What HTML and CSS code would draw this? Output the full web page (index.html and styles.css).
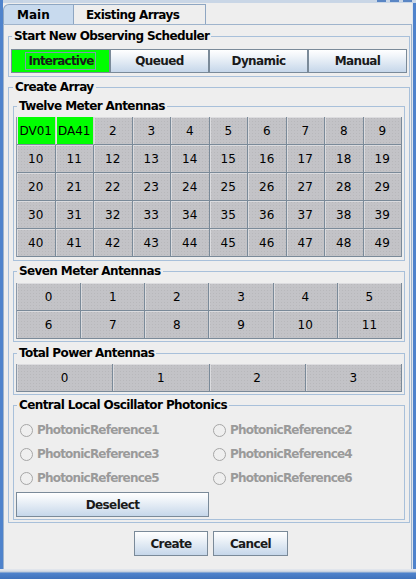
FILE: index.html
```html
<!DOCTYPE html>
<html>
<head>
<meta charset="utf-8">
<link rel="stylesheet" href="styles.css">
</head>
<body>
<div class="window">
  <div class="topbar"><span class="wbtn"></span><span class="wbtn"></span><span class="wbtn"></span></div>
  <div class="middle">
    <div class="edge-l"></div>
    <div class="content">
      <div class="tabs">
        <div class="tab sel">Main</div>
        <div class="tab">Existing Arrays</div>
      </div>
      <div class="panel">
        <fieldset class="grp g-sched">
          <legend>Start New Observing Scheduler</legend>
          <div class="seg">
            <div class="btn green"><span class="focus">Interactive</span></div>
            <div class="btn">Queued</div>
            <div class="btn">Dynamic</div>
            <div class="btn">Manual</div>
          </div>
        </fieldset>
        <fieldset class="grp g-create">
          <legend>Create Array</legend>
          <fieldset class="grp sub twelve">
            <legend>Twelve Meter Antennas</legend>
            <div class="cells c10">
              <div class="cell on">DV01</div><div class="cell on">DA41</div><div class="cell">2</div><div class="cell">3</div><div class="cell">4</div><div class="cell">5</div><div class="cell">6</div><div class="cell">7</div><div class="cell">8</div><div class="cell">9</div>
              <div class="cell">10</div><div class="cell">11</div><div class="cell">12</div><div class="cell">13</div><div class="cell">14</div><div class="cell">15</div><div class="cell">16</div><div class="cell">17</div><div class="cell">18</div><div class="cell">19</div>
              <div class="cell">20</div><div class="cell">21</div><div class="cell">22</div><div class="cell">23</div><div class="cell">24</div><div class="cell">25</div><div class="cell">26</div><div class="cell">27</div><div class="cell">28</div><div class="cell">29</div>
              <div class="cell">30</div><div class="cell">31</div><div class="cell">32</div><div class="cell">33</div><div class="cell">34</div><div class="cell">35</div><div class="cell">36</div><div class="cell">37</div><div class="cell">38</div><div class="cell">39</div>
              <div class="cell">40</div><div class="cell">41</div><div class="cell">42</div><div class="cell">43</div><div class="cell">44</div><div class="cell">45</div><div class="cell">46</div><div class="cell">47</div><div class="cell">48</div><div class="cell">49</div>
            </div>
          </fieldset>
          <fieldset class="grp sub seven">
            <legend>Seven Meter Antennas</legend>
            <div class="cells c6">
              <div class="cell">0</div><div class="cell">1</div><div class="cell">2</div><div class="cell">3</div><div class="cell">4</div><div class="cell">5</div>
              <div class="cell">6</div><div class="cell">7</div><div class="cell">8</div><div class="cell">9</div><div class="cell">10</div><div class="cell">11</div>
            </div>
          </fieldset>
          <fieldset class="grp sub tp">
            <legend>Total Power Antennas</legend>
            <div class="cells c4">
              <div class="cell">0</div><div class="cell">1</div><div class="cell">2</div><div class="cell">3</div>
            </div>
          </fieldset>
          <fieldset class="grp sub clo">
            <legend>Central Local Oscillator Photonics</legend>
            <div class="radios">
              <div class="radio"><span class="dot"></span>PhotonicReference1</div>
              <div class="radio"><span class="dot"></span>PhotonicReference2</div>
              <div class="radio"><span class="dot"></span>PhotonicReference3</div>
              <div class="radio"><span class="dot"></span>PhotonicReference4</div>
              <div class="radio"><span class="dot"></span>PhotonicReference5</div>
              <div class="radio"><span class="dot"></span>PhotonicReference6</div>
            </div>
            <div class="desel-row"><div class="btn deselect">Deselect</div></div>
          </fieldset>
        </fieldset>
        <div class="actions">
          <div class="btn act create">Create</div>
          <div class="btn act cancel">Cancel</div>
        </div>
      </div>
    </div>
    <div class="edge-r"></div>
  </div>
  <div class="bottombar"></div>
</div>
</body>
</html>
```
FILE: styles.css
```css
html, body {
  margin: 0;
  padding: 0;
  background: #eeeeee;
}
body {
  font-family: "DejaVu Sans", "Liberation Sans", sans-serif;
  font-size: 12px;
  color: #000;
}
.window {
  width: 416px;
  height: 579px;
  display: flex;
  flex-direction: column;
  background: #eeeeee;
  overflow: hidden;
}
.topbar {
  height: 3px;
  background: #c9d6e6;
  border-left: 3px solid #4f83cc;
  display: flex;
  justify-content: flex-end;
  gap: 4px;
  padding-right: 4px;
}
.wbtn {
  width: 9px;
  height: 2px;
  background: #5a86c4;
}
.middle {
  flex: 1;
  display: flex;
  min-height: 0;
}
.edge-l {
  width: 3px;
  background: #4f83cc;
}
.edge-r {
  width: 4px;
  background: linear-gradient(to right, #dfe6ee 0, #dfe6ee 1px, #4f83cc 1px);
}
.content {
  flex: 1;
  display: flex;
  flex-direction: column;
  padding-top: 1px;
  min-width: 0;
}
.tabs {
  display: flex;
  height: 20px;
}
.tab {
  box-sizing: border-box;
  height: 20px;
  border: 1px solid #8ea6c2;
  border-bottom: none;
  font-weight: bold;
  letter-spacing: -0.6px;
  line-height: 20px;
  padding-left: 13px;
  background: #eeeeee;
}
.tab.sel {
  width: 71px;
  background: #c8daee;
  border-top-left-radius: 6px;
  border-color: #8ea6c2;
  letter-spacing: 0;
}
.tab + .tab {
  width: 132px;
  border-left: none;
  padding-left: 12px;
}
.panel {
  flex: 1;
  border: 1px solid #9fb4cc;
  border-bottom: none;
  padding: 4px 1px 0 4px;
  display: flex;
  flex-direction: column;
}
.grp {
  margin: 0;
  border: 1px solid #a8c0da;
  min-inline-size: 0;
}
.grp > legend {
  font-weight: bold;
  letter-spacing: -0.6px;
  line-height: 14px;
  padding: 0 2px;
  margin-left: 1px;
}
.g-sched {
  padding: 6px 2px 3px 2px;
}
.seg {
  display: flex;
}
.btn {
  box-sizing: border-box;
  border: 1px solid #7a8a99;
  background: linear-gradient(#ffffff 0%, #f2f6fa 25%, #c6d7ea 100%);
  font-weight: bold;
  letter-spacing: -0.6px;
  color: #1a1a1a;
  display: flex;
  align-items: center;
  justify-content: center;
}
.seg .btn {
  flex: 1;
  height: 24px;
}
.btn.green {
  background: #00ff00;
}
.focus {
  border: 1px solid #7f98b0;
  height: 16px;
  line-height: 16px;
  padding: 0 1px 0 2px;
  letter-spacing: -0.8px;
}
.g-create {
  margin-top: 3px;
  padding: 5px 4px 2px 4px;
}
.g-create > legend {
  margin-left: 0;
}
.sub {
  padding: 4px 2px 3px 2px;
}
.seven {
  margin-top: 3px;
  padding-top: 5px;
  padding-bottom: 2px;
}
.tp {
  margin-top: 4px;
  padding-top: 4px;
  padding-bottom: 2px;
}
.clo {
  margin-top: 3px;
  padding-top: 6px;
  padding-bottom: 2px;
}
.cells {
  display: grid;
  grid-auto-rows: 28px;
  border-left: 1px solid #8a98a8;
}
.c10 { grid-template-columns: repeat(10, 1fr); }
.c6 { grid-template-columns: repeat(6, 1fr); }
.c4 { grid-template-columns: repeat(4, 1fr); }
.cell {
  box-sizing: border-box;
  background-color: #c3c3c7;
  background-image: radial-gradient(circle, rgba(0,0,0,0.06) 0.6px, transparent 0.8px);
  background-size: 3px 3px;
  border-right: 1px solid #7a8a99;
  border-bottom: 1px solid #7a8a99;
  box-shadow: inset 1px 1px 0 #dcdcdf;
  display: flex;
  align-items: center;
  justify-content: center;
  font-size: 12px;
  color: #000;
}
.cell.on {
  background: #00ff00;
  box-shadow: inset 1px 0 0 #e6e6e6;
  border-right: 1px solid #d0d0d0;
}
.radios {
  display: grid;
  grid-template-columns: 1fr 1fr;
  grid-auto-rows: 24px;
}
.radio {
  display: flex;
  align-items: center;
  padding-left: 4px;
  font-weight: bold;
  letter-spacing: -0.8px;
  color: #9a9a9a;
}
.dot {
  box-sizing: border-box;
  width: 13px;
  height: 13px;
  border: 1px solid #a6a6a6;
  border-radius: 50%;
  margin-right: 4px;
  background: #efefef;
}
.desel-row {
  display: grid;
  grid-template-columns: 1fr 1fr;
  margin-top: 2px;
}
.deselect {
  height: 25px;
}
.actions {
  display: flex;
  justify-content: center;
  gap: 5px;
  margin-top: 8px;
  padding-left: 4px;
}
.act {
  height: 25px;
}
.create { width: 74px; }
.cancel { width: 75px; }
.bottombar {
  height: 10px;
  background: linear-gradient(#e4e8ee 0, #d6dde6 2px, #b9c7d8 3px, #4f83cc 4px, #3f72bb 10px);
}
```
